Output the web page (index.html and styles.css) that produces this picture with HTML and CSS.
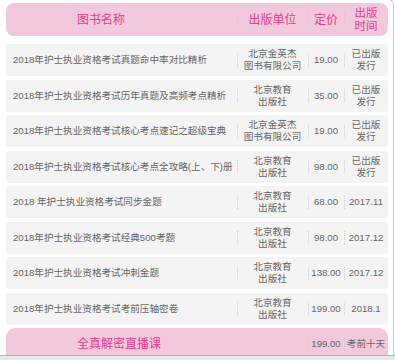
FILE: index.html
```html
<!DOCTYPE html>
<html lang="zh-CN">
<head>
<meta charset="utf-8">
<title>图书列表</title>
<link rel="stylesheet" href="styles.css">
</head>
<body>
<div class="frame">
  <div class="head grid">
    <div class="c1 title">图书名称</div>
    <div class="c2 sep">出版单位</div>
    <div class="c3 sep">定价</div>
    <div class="c4 sep">出版<br>时间</div>
  </div>
  <div class="row grid">
    <div class="c1 name">2018年护士执业资格考试真题命中率对比精析</div>
    <div class="c2 sep">北京金英杰<br>图书有限公司</div>
    <div class="c3 sep">19.00</div>
    <div class="c4 sep">已出版<br>发行</div>
  </div>
  <div class="row grid">
    <div class="c1 name">2018年护士执业资格考试历年真题及高频考点精析</div>
    <div class="c2 sep">北京教育<br>出版社</div>
    <div class="c3 sep">35.00</div>
    <div class="c4 sep">已出版<br>发行</div>
  </div>
  <div class="row grid">
    <div class="c1 name">2018年护士执业资格考试核心考点速记之超级宝典</div>
    <div class="c2 sep">北京金英杰<br>图书有限公司</div>
    <div class="c3 sep">19.00</div>
    <div class="c4 sep">已出版<br>发行</div>
  </div>
  <div class="row grid">
    <div class="c1 name">2018年护士执业资格考试核心考点全攻略(上、下)册</div>
    <div class="c2 sep">北京教育<br>出版社</div>
    <div class="c3 sep">98.00</div>
    <div class="c4 sep">已出版<br>发行</div>
  </div>
  <div class="row grid">
    <div class="c1 name">2018 年护士执业资格考试同步金题</div>
    <div class="c2 sep">北京教育<br>出版社</div>
    <div class="c3 sep">68.00</div>
    <div class="c4 sep">2017.11</div>
  </div>
  <div class="row grid">
    <div class="c1 name">2018年护士执业资格考试经典500考题</div>
    <div class="c2 sep">北京教育<br>出版社</div>
    <div class="c3 sep">98.00</div>
    <div class="c4 sep">2017.12</div>
  </div>
  <div class="row grid">
    <div class="c1 name">2018年护士执业资格考试冲刺金题</div>
    <div class="c2 sep">北京教育<br>出版社</div>
    <div class="c3 sep">138.00</div>
    <div class="c4 sep">2017.12</div>
  </div>
  <div class="row grid">
    <div class="c1 name">2018年护士执业资格考试考前压轴密卷</div>
    <div class="c2 sep">北京教育<br>出版社</div>
    <div class="c3 sep">199.00</div>
    <div class="c4 sep">2018.1</div>
  </div>
  <div class="foot grid">
    <div class="c1 title">全真解密直播课</div>
    <div class="c2"></div>
    <div class="c3 sep">199.00</div>
    <div class="c4 sep">考前十天</div>
  </div>
</div>
<div class="toolbar"></div>
</body>
</html>
```
FILE: styles.css
```css
html, body {
  margin: 0;
  padding: 0;
  background: #fff;
  overflow: hidden;
}
body {
  width: 395px;
  height: 360px;
  font-family: "Liberation Sans", "Noto Sans CJK SC", sans-serif;
  color: #666;
}
.frame {
  box-sizing: border-box;
  width: 394px;
  height: 363px;
  overflow: hidden;
  margin-top: -3px;
  padding: 5px 5px 0 6px;
  border-top: 1px solid #d4c2e6;
  border-right: 1px solid #d4c2e6;
  border-top-right-radius: 9px;
}
.grid {
  display: grid;
  grid-template-columns: 231px 71px 36px 44px;
  align-items: stretch;
}
.grid > div {
  display: flex;
  align-items: center;
  justify-content: center;
  text-align: center;
  line-height: 12px;
  white-space: nowrap;
}
.sep {
  background-image: repeating-linear-gradient(to bottom, #cfcfcf 0 1px, transparent 1px 2px);
  background-size: 1px 13px;
  background-position: left center;
  background-repeat: no-repeat;
}
.head {
  height: 33px;
  background: #f2c8dd;
  border-radius: 8px;
  color: #e33d8c;
  font-size: 12px;
  margin-bottom: 8px;
}
.head .sep, .foot .sep {
  background-image: repeating-linear-gradient(to bottom, #d9c3cf 0 1px, transparent 1px 2px);
}
.grid > .title {
  justify-content: flex-start;
  padding-left: 71px;
  font-size: 12px;
  color: #e33d8c;
}
.head > .c4 {
  font-size: 11.5px;
  line-height: 12.5px;
}
.row {
  height: 32px;
  background: #f4f4f4;
  border-radius: 3px;
  margin-bottom: 3.5px;
  font-size: 9.6px;
}
.grid > .name {
  justify-content: flex-start;
  padding-left: 7px;
  color: #666;
}
.row .c3, .row .c4, .foot .c3, .foot .c4 {
  color: #666;
}
.foot {
  box-sizing: border-box;
  margin-top: 2.5px;
  height: 29px;
  padding-top: 3px;
  background: #f2c8dd;
  border-radius: 9px 9px 0 0;
  font-size: 9.6px;
}
.toolbar {
  position: fixed;
  left: 0;
  right: 0;
  bottom: 0;
  height: 4px;
  background: #e8e9ee;
  border-top: 1px solid #b3b3bb;
}
```
